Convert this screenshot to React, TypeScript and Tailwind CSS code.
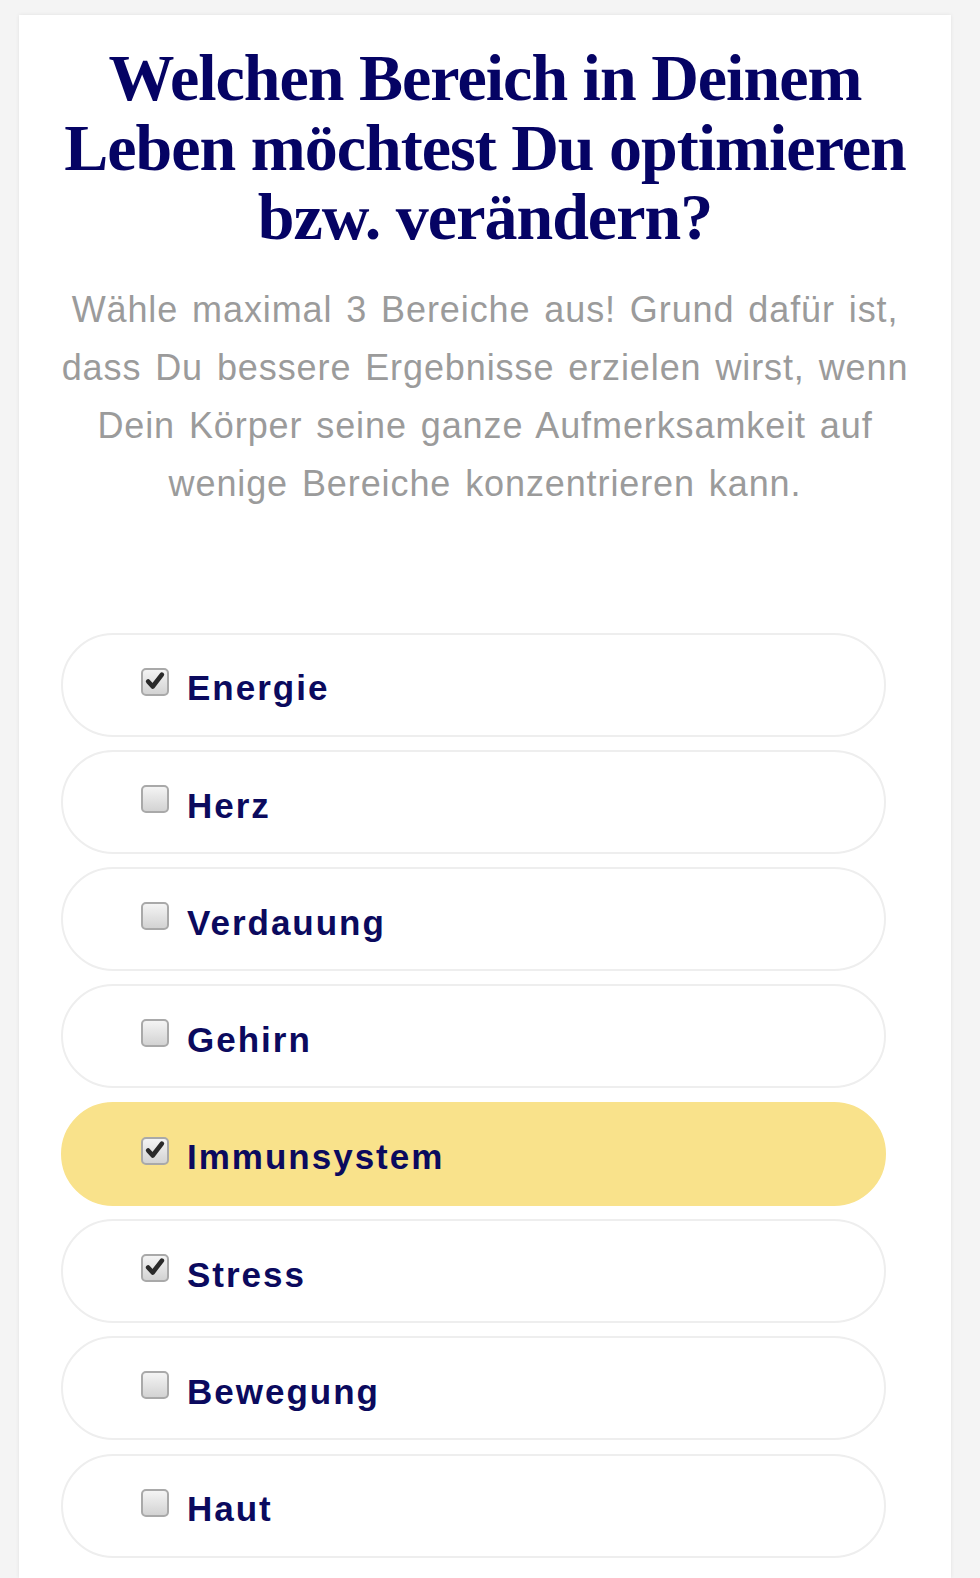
import React from "react";

const options = [
  { label: "Energie", checked: true, active: false },
  { label: "Herz", checked: false, active: false },
  { label: "Verdauung", checked: false, active: false },
  { label: "Gehirn", checked: false, active: false },
  { label: "Immunsystem", checked: true, active: true },
  { label: "Stress", checked: true, active: false },
  { label: "Bewegung", checked: false, active: false },
  { label: "Haut", checked: false, active: false },
];

function Box({ checked }: { checked: boolean }) {
  return (
    <div className="relative w-[28px] h-[28px] shrink-0 rounded-[5px] border-2 border-[#a9a9a9] bg-gradient-to-b from-[#f4f4f4] to-[#d3d3d3] -mt-[6px]">
      {checked && (
        <svg viewBox="0 0 24 24" className="absolute left-[1px] top-[0px] w-[22px] h-[22px]">
          <path d="M4.5 12.5 L9.5 18 L19.5 5" fill="none" stroke="#2a2a2a" strokeWidth="5" strokeLinecap="round" strokeLinejoin="round" />
        </svg>
      )}
    </div>
  );
}

export default function App() {
  return (
    <div className="min-h-[1578px] bg-[#f4f4f4] pt-[15px] pl-[19px] pr-[29px]">
      <div className="w-[932px] bg-white min-h-[1563px] shadow-[0_0_4px_rgba(0,0,0,0.08)] pt-[28px]">
        <h1
          className="text-center text-[66px] leading-[69.5px] font-bold text-[#050364] tracking-[-1px] px-[30px]"
          style={{ fontFamily: '"Liberation Serif", "Times New Roman", serif' }}
        >
          Welchen Bereich in Deinem
          <br />
          Leben möchtest Du optimieren
          <br />
          bzw. verändern?
        </h1>
        <p
          className="mt-[29px] text-center text-[36px] leading-[58px] text-[#9b9b9b] tracking-[0.9px] [word-spacing:3px] px-[20px]"
          style={{ fontFamily: '"Liberation Sans", Arial, sans-serif' }}
        >
          Wähle maximal 3 Bereiche aus! Grund dafür ist,
          <br />
          dass Du bessere Ergebnisse erzielen wirst, wenn
          <br />
          Dein Körper seine ganze Aufmerksamkeit auf
          <br />
          wenige Bereiche konzentrieren kann.
        </p>
        <div className="mt-[120px] ml-[42px] mr-[65px] flex flex-col gap-[13.3px]">
          {options.map((o) => (
            <div
              key={o.label}
              className={
                "h-[104px] rounded-full border-2 flex items-center pl-[78px] gap-[18px] " +
                (o.active ? "bg-[#f9e28b] border-[#f9e28b]" : "bg-white border-[#eeeeee]")
              }
            >
              <Box checked={o.checked} />
              <span
                className="mt-[8px] text-[35px] font-bold text-[#0b0a5e] tracking-[2px]"
                style={{ fontFamily: '"Liberation Sans", Arial, sans-serif' }}
              >
                {o.label}
              </span>
            </div>
          ))}
        </div>
      </div>
    </div>
  );
}
